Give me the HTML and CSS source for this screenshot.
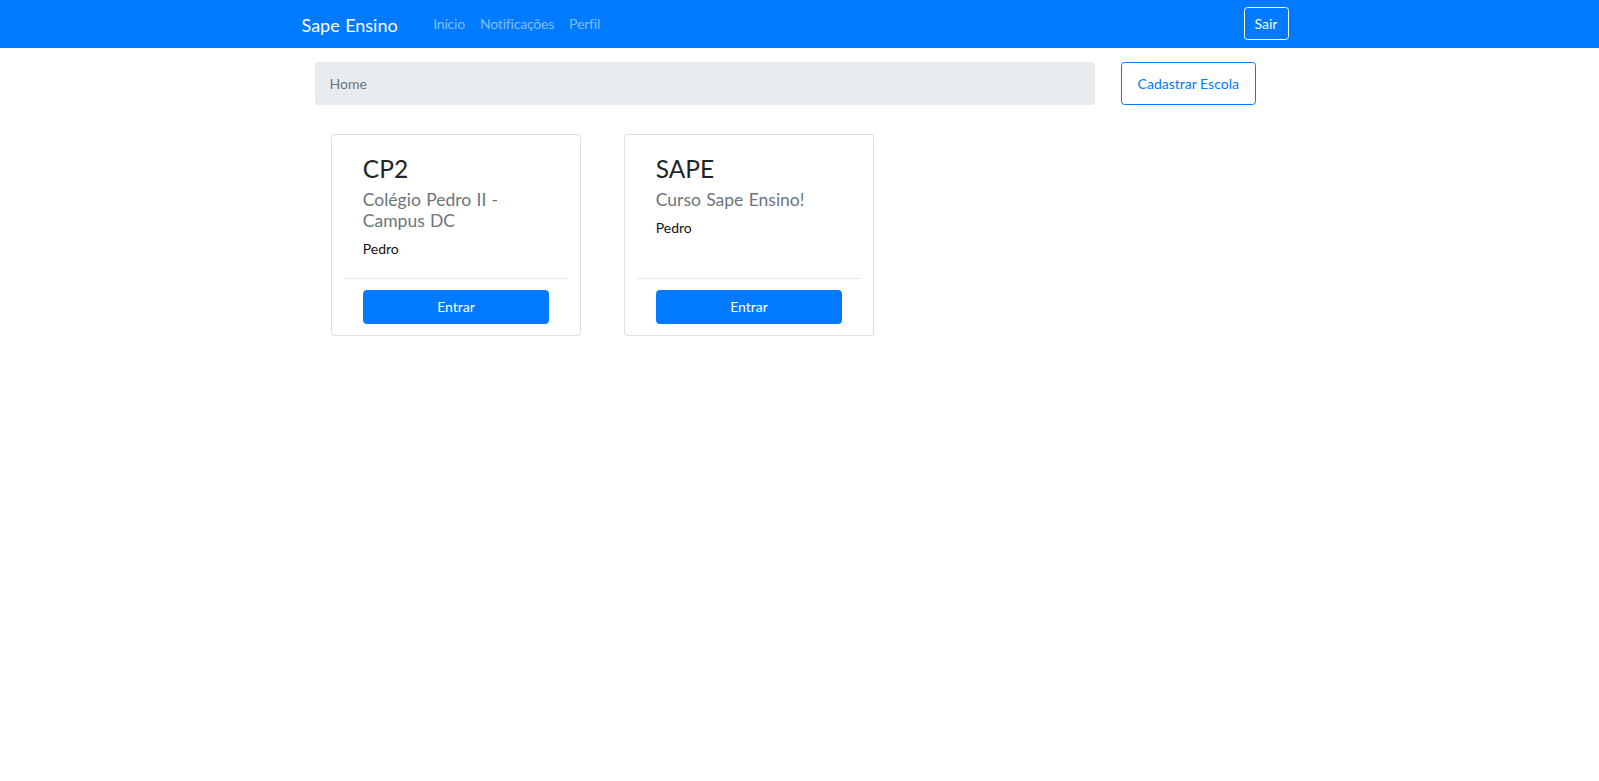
FILE: index.html
```html
<!DOCTYPE html>
<html lang="pt-BR">
<head>
<meta charset="utf-8">
<title>Sape Ensino</title>
<link rel="stylesheet" href="styles.css">
</head>
<body>
<nav class="navbar">
  <div class="nav-inner">
    <a class="brand" href="#">Sape Ensino</a>
    <ul class="nav-links">
      <li><a href="#">Início</a></li>
      <li><a href="#">Notificações</a></li>
      <li><a href="#">Perfil</a></li>
    </ul>
    <button class="btn-sair" type="button">Sair</button>
  </div>
</nav>
<main class="container">
  <div class="toolbar">
    <div class="crumb">Home</div>
    <button class="btn-cadastrar" type="button">Cadastrar Escola</button>
  </div>
  <div class="cards">
    <div class="card">
      <div class="card-body">
        <h3 class="card-title">CP2</h3>
        <h5 class="card-subtitle">Colégio Pedro II - Campus DC</h5>
        <p class="card-text">Pedro</p>
      </div>
      <hr class="card-rule">
      <button class="btn-entrar" type="button">Entrar</button>
    </div>
    <div class="card">
      <div class="card-body">
        <h3 class="card-title">SAPE</h3>
        <h5 class="card-subtitle">Curso Sape Ensino!</h5>
        <p class="card-text">Pedro</p>
      </div>
      <hr class="card-rule">
      <button class="btn-entrar" type="button">Entrar</button>
    </div>
  </div>
</main>
</body>
</html>
```
FILE: styles.css
```css
* { box-sizing: border-box; }

body {
  margin: 0;
  background: #fff;
  font-family: Lato, "Open Sans", "Liberation Sans", sans-serif;
  font-size: 14px;
  line-height: 1.5;
  color: #212529;
  word-spacing: 0.06em;
}

button { font-family: inherit; cursor: pointer; }

.navbar {
  background: #007bff;
  height: 48px;
}

.nav-inner {
  width: 996px;
  margin: 0 auto;
  height: 48px;
  display: flex;
  align-items: center;
}

.brand {
  color: #fff;
  text-decoration: none;
  font-size: 18px;
  line-height: 26px;
  margin-top: 1px;
  margin-right: 28px;
}

.nav-links {
  list-style: none;
  margin: 0;
  padding: 0;
  display: flex;
  margin-top: -2px;
}

.nav-links a {
  display: block;
  padding: 0 7.5px;
  color: rgba(255, 255, 255, 0.5);
  text-decoration: none;
  font-size: 14px;
  line-height: 21px;
  letter-spacing: -0.2px;
}

.btn-sair {
  margin-left: auto;
  margin-right: 9px;
  margin-top: -1px;
  width: 45px;
  height: 33px;
  padding: 0;
  background: transparent;
  border: 1px solid #f8f9fa;
  border-radius: 3.5px;
  color: #f8f9fa;
  font-size: 14px;
}

.container {
  width: 996px;
  margin: 0 auto;
}

.toolbar {
  display: flex;
  margin-top: 14px;
  padding-left: 13.5px;
}

.crumb {
  width: 780px;
  height: 43px;
  background: #e9ecef;
  border-radius: 3.5px;
  padding: 10.5px 14.5px;
  color: #6c757d;
  line-height: 21px;
}

.btn-cadastrar {
  margin-left: 26px;
  width: 134.5px;
  height: 42.5px;
  padding: 0;
  background: #fff;
  border: 1px solid #007bff;
  border-radius: 3.5px;
  color: #007bff;
  font-size: 14px;
}

.cards {
  display: flex;
  gap: 43.5px;
  margin-top: 29.3px;
  padding-left: 29.8px;
}

.card {
  width: 249.5px;
  border: 1px solid rgba(0, 0, 0, 0.125);
  border-radius: 3.5px;
  padding: 13px 13px 11.5px;
  display: flex;
  flex-direction: column;
}

.card-body {
  flex: 1;
  padding: 5.8px 17.5px 18.9px;
}

.card-title {
  margin: 0 0 6px;
  font-size: 24.5px;
  font-weight: 400;
  line-height: 1.2;
  color: #212529;
}

.card-subtitle {
  margin: 0 0 6.5px;
  font-size: 17.5px;
  font-weight: 400;
  line-height: 1.2;
  color: #6c757d;
}

.card-text {
  margin: 0;
  color: #111;
  line-height: 21px;
}

.card-rule {
  margin: 0 0 10.7px;
  border: 0;
  border-top: 1px solid rgba(0, 0, 0, 0.1);
  height: 0;
}

.btn-entrar {
  margin: 0 17.5px;
  height: 34px;
  padding: 0;
  background: #007bff;
  border: 1px solid #007bff;
  border-radius: 3.5px;
  color: #fff;
  font-size: 14px;
}
```
